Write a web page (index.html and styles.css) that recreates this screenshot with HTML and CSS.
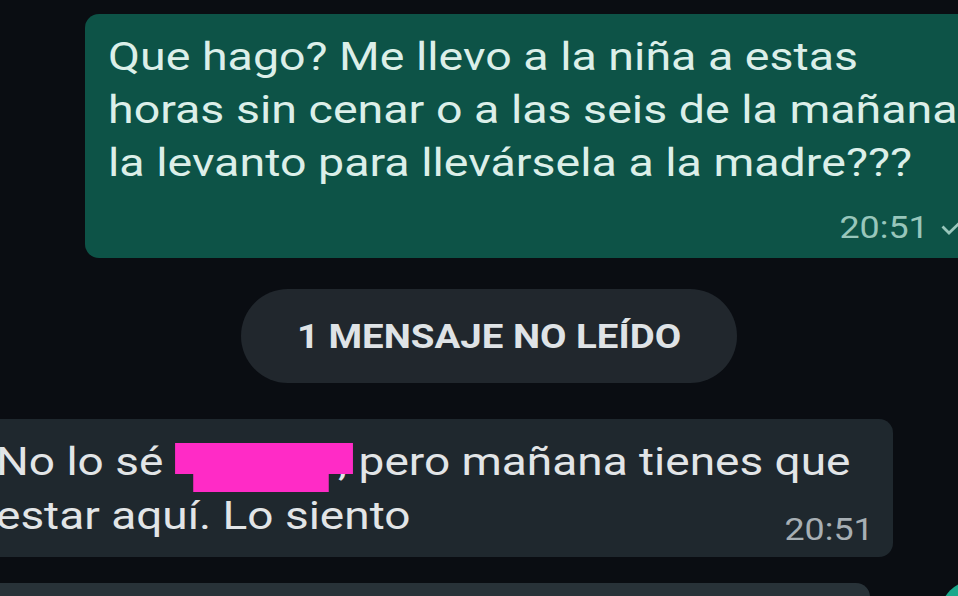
FILE: index.html
```html
<!DOCTYPE html>
<html lang="es">
<head>
    <meta charset="UTF-8">
    <meta name="viewport" content="width=device-width, initial-scale=1.0">
    <title>Chat</title>
    <link rel="stylesheet" href="styles.css">
</head>
<body>
    <main class="chat">
        <div class="msg msg-out">
            <p class="msg-text">Que hago? Me llevo a la niña a estas<br>horas sin cenar o a las seis de la mañana<br>la levanto para llevársela a la madre???</p>
            <div class="msg-meta">
                <span class="msg-time">20:51</span>
                <svg class="tick" viewBox="0 0 20 14" width="20" height="14">
                    <path d="M1.5 5.5 L8 12 L19 1.5" fill="none" stroke="currentColor" stroke-width="2.8"/>
                </svg>
            </div>
        </div>

        <div class="unread-row">
            <div class="unread-pill"><span class="unread-label">1 MENSAJE NO LEÍDO</span></div>
        </div>

        <div class="msg msg-in">
            <p class="msg-text">No lo sé <span class="redact"></span>, pero mañana tienes que<br>estar aquí. Lo siento</p>
            <div class="msg-meta">
                <span class="msg-time">20:51</span>
            </div>
        </div>

        <div class="msg msg-next"></div>
    </main>
    <div class="fab"></div>
</body>
</html>
```

FILE: styles.css
```css
:root {
    --bg: #0a0d12;
    --out-bg: #0d5347;
    --out-text: #dcefe9;
    --out-meta: #98c6bb;
    --in-bg: #1f282e;
    --in-text: #e2e5e7;
    --in-meta: #a7afb4;
    --pill-bg: #21272d;
    --redact: #ff2bc6;
}

* {
    margin: 0;
    padding: 0;
    box-sizing: border-box;
}

body {
    font-family: Roboto, "Noto Sans", sans-serif;
    background: var(--bg);
    width: 958px;
    height: 596px;
    overflow: hidden;
    position: relative;
}

.chat {
    display: flex;
    flex-direction: column;
    padding-top: 14px;
    overflow: hidden;
    height: 596px;
}

.msg {
    border-radius: 14px;
    flex-shrink: 0;
}

/* the screenshot is a little wider than tall, so text is stretched to match */
.msg-text {
    font-size: 38px;
    white-space: nowrap;
    transform-origin: 0 0;
}

.msg-meta {
    display: flex;
    justify-content: flex-end;
    align-items: center;
    gap: 12px;
}

.msg-time {
    display: inline-block;
    font-size: 32px;
    line-height: 32px;
    transform: scaleX(1.12);
    transform-origin: 100% 50%;
}

/* outgoing bubble runs off the right edge */
.msg-out {
    margin-left: 85px;
    margin-right: -17px;
    padding: 17px 14px 15px 23px;
    background: var(--out-bg);
    color: var(--out-text);
}

.msg-out .msg-text {
    line-height: 53px;
    transform: scaleX(1.225);
}

.msg-out .msg-meta {
    margin-top: 20.5px;
    color: var(--out-meta);
}

.tick {
    margin-top: 2px;
}

.unread-row {
    display: flex;
    padding: 31px 0 36px 241px;
}

.unread-pill {
    width: 496px;
    height: 94px;
    border-radius: 47px;
    background: var(--pill-bg);
    color: #dfe3e6;
    display: flex;
    align-items: center;
    justify-content: center;
}

.unread-label {
    font-size: 34px;
    font-weight: bold;
    transform: scaleX(1.13);
}

/* incoming bubble runs off the left edge */
.msg-in {
    margin-left: -20px;
    width: 913px;
    padding: 16px 19px 12px 16px;
    background: var(--in-bg);
    color: var(--in-text);
}

.msg-in .msg-text {
    line-height: 54px;
    transform: scaleX(1.21);
}

.msg-in .msg-meta {
    margin-top: -30px;
    color: var(--in-meta);
}

.redact {
    display: inline-block;
    position: relative;
    width: 147px;
    height: 31px;
    margin-right: -12px;
    vertical-align: 1px;
    background: var(--redact);
}

.redact::after {
    content: "";
    position: absolute;
    left: 15px;
    top: 30px;
    width: 112px;
    height: 19px;
    background: var(--redact);
}

.msg-next {
    margin-top: 26px;
    margin-left: -20px;
    width: 890px;
    height: 60px;
    background: #283238;
}

.fab {
    position: absolute;
    left: 940px;
    top: 580px;
    width: 70px;
    height: 70px;
    border-radius: 50%;
    background: #1aa88b;
}
```
